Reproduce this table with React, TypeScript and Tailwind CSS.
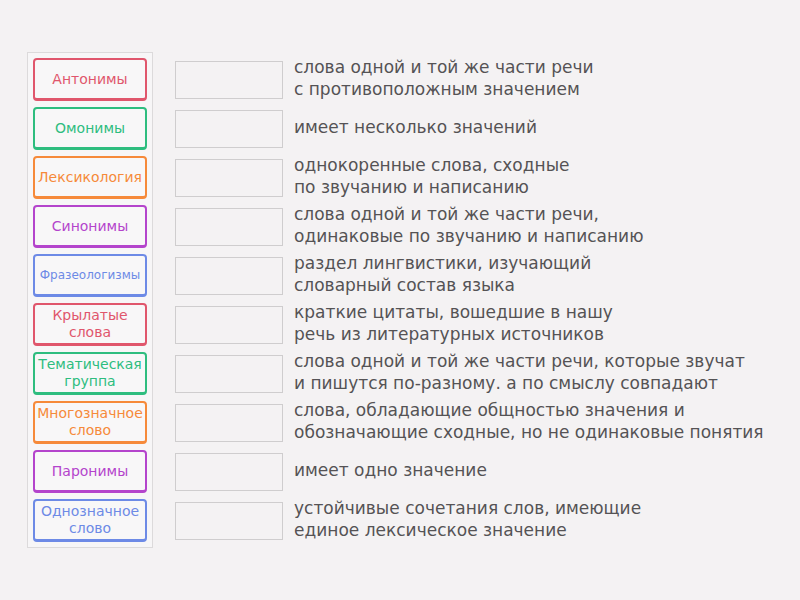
import React from "react";

const tiles: { label: string[]; color: string; small?: boolean }[] = [
  { label: ["Антонимы"], color: "red" },
  { label: ["Омонимы"], color: "green" },
  { label: ["Лексикология"], color: "orange" },
  { label: ["Синонимы"], color: "purple" },
  { label: ["Фразеологизмы"], color: "blue", small: true },
  { label: ["Крылатые", "слова"], color: "red" },
  { label: ["Тематическая", "группа"], color: "green" },
  { label: ["Многозначное", "слово"], color: "orange" },
  { label: ["Паронимы"], color: "purple" },
  { label: ["Однозначное", "слово"], color: "blue" },
];

const colorClass: Record<string, string> = {
  red: "border-[#e0566c] text-[#e0566c]",
  green: "border-[#2ebd7f] text-[#2ebd7f]",
  orange: "border-[#f68a3a] text-[#f68a3a]",
  purple: "border-[#b444cc] text-[#b444cc]",
  blue: "border-[#6d8ae6] text-[#6d8ae6]",
};

const defs: string[][] = [
  ["слова одной и той же части речи", "с противоположным значением"],
  ["имеет несколько значений"],
  ["однокоренные слова, сходные", "по звучанию и написанию"],
  ["слова одной и той же части речи,", "одинаковые по звучанию и написанию"],
  ["раздел лингвистики, изучающий", "словарный состав языка"],
  ["краткие цитаты, вошедшие в нашу", "речь из литературных источников"],
  ["слова одной и той же части речи, которые звучат", "и пишутся по-разному. а по смыслу совпадают"],
  ["слова, обладающие общностью значения и", "обозначающие сходные, но не одинаковые понятия"],
  ["имеет одно значение"],
  ["устойчивые сочетания слов, имеющие", "единое лексическое значение"],
];

export default function App() {
  return (
    <div
      className="w-[800px] h-[600px] bg-[#f4f2f3] flex items-start pl-[27px] pt-[52px]"
      style={{ fontFamily: '"DejaVu Sans", "Open Sans", sans-serif' }}
    >
      <div className="w-[126px] border border-[#dcdadb] bg-[#f7f6f7] px-[5px] py-[5px] flex flex-col gap-[6px]">
        {tiles.map((t, i) => (
          <div
            key={i}
            className={`h-[43px] rounded-[4px] border-2 border-b-[3px] bg-[#f8f7f8] flex flex-col items-center justify-center leading-[17px] ${colorClass[t.color]} ${t.small ? "text-[12px]" : "text-[14px]"}`}
          >
            {t.label.map((l, j) => (
              <span key={j}>{l}</span>
            ))}
          </div>
        ))}
      </div>
      <div className="ml-[22px] mt-[9px] flex flex-col">
        {defs.map((d, i) => (
          <div key={i} className="h-[49px] flex items-start">
            <div className="w-[108px] h-[38px] border border-[#cfcdce] bg-[#f4f2f3] shrink-0" />
            <div className="ml-[11px] -mt-[8px] h-[49px] flex flex-col justify-center text-[17px] leading-[22px] text-[#555355] whitespace-nowrap">
              {d.map((l, j) => (
                <span key={j}>{l}</span>
              ))}
            </div>
          </div>
        ))}
      </div>
    </div>
  );
}
